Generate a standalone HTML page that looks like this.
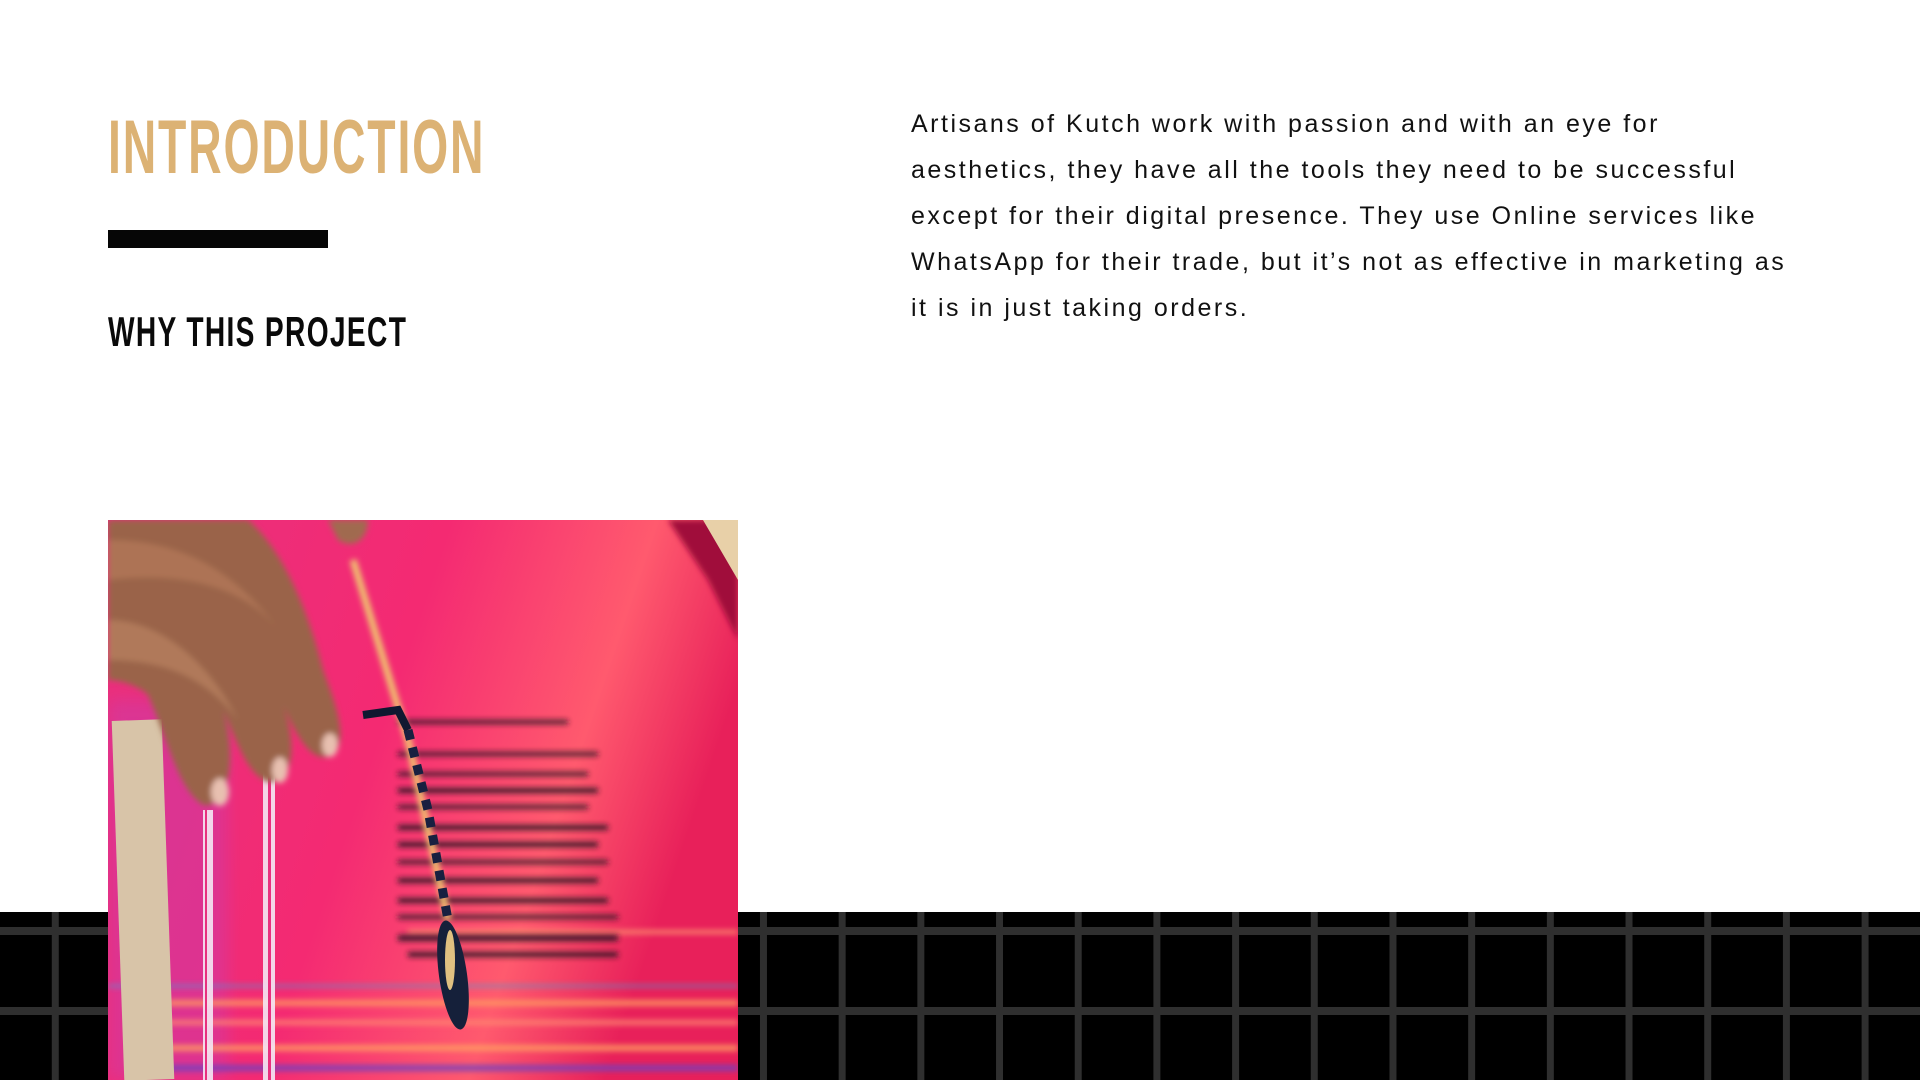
<!DOCTYPE html>
<html><head><meta charset="utf-8"><style>
html,body{margin:0;padding:0;width:1920px;height:1080px;overflow:hidden;background:#fff;position:relative}
.h1{position:absolute;left:108px;top:104px;font-family:"Liberation Sans Narrow","Liberation Sans",sans-serif;font-weight:bold;font-size:76px;line-height:88px;color:#dcb274;transform:scaleX(0.61);transform-origin:left top;white-space:nowrap;letter-spacing:3px}
.bar{position:absolute;left:108px;top:230px;width:220px;height:18px;background:#060606}
.h2{position:absolute;left:108px;top:308px;font-family:"Liberation Sans Narrow","Liberation Sans",sans-serif;font-weight:bold;font-size:42px;line-height:48px;color:#0a0a0a;transform:scaleX(0.67);transform-origin:left top;white-space:nowrap;letter-spacing:2px}
.p{position:absolute;left:911px;top:101px;width:1000px;font-family:"Liberation Sans",sans-serif;font-size:25px;line-height:46px;letter-spacing:2.5px;color:#111;white-space:nowrap}
.band{position:absolute;left:0;top:912px;width:1920px;height:168px;background:#000;
background-image:linear-gradient(90deg,transparent 52px,#2f2f2f 52px,#2f2f2f 59px,transparent 59px),linear-gradient(180deg,transparent 15px,#2f2f2f 15px,#2f2f2f 23px,transparent 23px);
background-size:78.7px 100%,100% 80px;background-repeat:repeat-x,repeat-y;background-color:#000}
.img{position:absolute;left:108px;top:520px;width:630px;height:560px}
</style></head><body>
<div class="h1">INTRODUCTION</div>
<div class="bar"></div>
<div class="h2">WHY THIS PROJECT</div>
<div class="p">Artisans of Kutch work with passion and with an eye for<br>aesthetics, they have all the tools they need to be successful<br>except for their digital presence. They use Online services like<br>WhatsApp for their trade, but it’s not as effective in marketing as<br>it is in just taking orders.</div>
<div class="band"></div>
<svg class="img" viewBox="0 0 630 560" xmlns="http://www.w3.org/2000/svg">
<defs>
<linearGradient id="bg" x1="0" y1="0" x2="1" y2="0.3">
<stop offset="0" stop-color="#e8307e"/><stop offset="0.5" stop-color="#f42a72"/><stop offset="0.8" stop-color="#ff5a6e"/><stop offset="1" stop-color="#e8205a"/>
</linearGradient>
<filter id="bl"><feGaussianBlur stdDeviation="3"/></filter>
<filter id="bl2"><feGaussianBlur stdDeviation="8"/></filter>
</defs>
<rect width="630" height="560" fill="url(#bg)"/>
<rect x="0" y="180" width="120" height="380" fill="#c83cb0" opacity="0.45" filter="url(#bl2)"/>
<polygon points="560,0 630,0 630,120 600,60" fill="#a0103a" filter="url(#bl)"/>
<polygon points="595,0 630,0 630,60" fill="#e8d0a8"/>
<g filter="url(#bl)" opacity="0.85">
<rect x="60" y="480" width="570" height="6" fill="#ff9a60"/>
<rect x="60" y="500" width="570" height="5" fill="#ff8a70"/>
<rect x="60" y="525" width="570" height="6" fill="#ffa060"/>
<rect x="60" y="545" width="570" height="6" fill="#7040c0"/>
<rect x="300" y="410" width="330" height="4" fill="#ff9a70"/>
<rect x="0" y="465" width="630" height="2" fill="#40a0e0"/>
</g>
<g fill="#201820" filter="url(#bl)" opacity="0.9">
<rect x="290" y="200" width="170" height="4"/><rect x="290" y="232" width="200" height="4"/><rect x="290" y="252" width="190" height="4"/>
<rect x="290" y="268" width="200" height="5"/><rect x="290" y="285" width="190" height="4"/><rect x="290" y="305" width="210" height="5"/>
<rect x="290" y="322" width="200" height="5"/><rect x="290" y="340" width="210" height="4"/><rect x="290" y="358" width="200" height="5"/>
<rect x="290" y="378" width="210" height="5"/><rect x="290" y="395" width="220" height="4"/><rect x="290" y="415" width="220" height="6"/><rect x="300" y="432" width="210" height="5"/>
</g>
<path d="M245,40 L300,220 L340,400" stroke="#f0c070" stroke-width="7" fill="none" filter="url(#bl)"/>
<path d="M255,195 L290,190 L300,210" stroke="#101830" stroke-width="8" fill="none"/>
<path d="M300,210 L320,290 L340,400" stroke="#182040" stroke-width="9" stroke-dasharray="10 8" fill="none"/>
<ellipse cx="345" cy="455" rx="14" ry="55" fill="#15203a" transform="rotate(-8 345 455)"/>
<ellipse cx="342" cy="440" rx="5" ry="30" fill="#e0c080"/>
<rect x="10" y="200" width="50" height="360" fill="#d8c4a8" transform="rotate(-2 35 380)"/>
<g fill="#f4e8f4" opacity="0.9">
<rect x="95" y="290" width="10" height="270"/><rect x="155" y="210" width="12" height="350"/>
</g>
<g fill="#e8307e"><rect x="97" y="290" width="2" height="270"/><rect x="160" y="210" width="3" height="350"/></g>
<g filter="url(#bl)">
<path d="M0,0 L140,0 C175,30 200,90 215,150 C230,190 240,220 225,235 C205,245 190,220 175,185 C190,225 185,265 160,262 C140,255 130,225 115,190 C130,240 120,290 95,285 C70,270 60,220 40,175 C30,165 10,160 0,160 Z" fill="#9a6348"/>
<path d="M0,20 C60,20 120,40 170,110 C140,70 80,50 0,60 Z" fill="#b57a5a" opacity="0.7"/>
<path d="M0,100 C50,100 100,140 130,200 C100,160 60,140 0,140 Z" fill="#c08868" opacity="0.6"/>
<ellipse cx="222" cy="225" rx="8" ry="12" fill="#e8c0b0"/>
<ellipse cx="172" cy="250" rx="8" ry="13" fill="#e8c0b0"/>
<ellipse cx="112" cy="272" rx="9" ry="14" fill="#e8c0b0"/>
<path d="M220,0 L260,0 C260,20 245,30 230,20 Z" fill="#a06a50"/>
</g>
</svg>
</body></html>
